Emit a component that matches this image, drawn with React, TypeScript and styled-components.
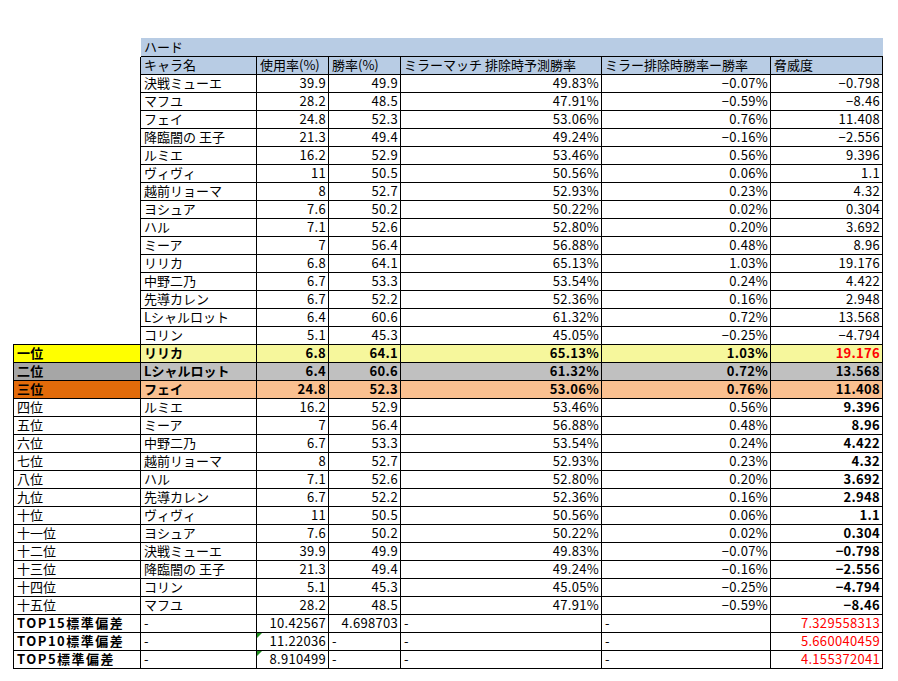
import React from "react";
import styled, { createGlobalStyle, css } from "styled-components";

const Global = createGlobalStyle`
  html, body { margin: 0; padding: 0; background: #fff; }
  body { font-family: "MS PGothic", "Noto Sans CJK JP", sans-serif; color: #000; }
`;

const Sheet = styled.div`
  box-sizing: border-box;
  width: 898px;
  height: 681px;
  padding: 38px 0 0 13px;
`;

const Grid = styled.div`
  display: grid;
  grid-template-columns: 128px 116px 72px 72px 201px 169px 112px;
  grid-template-rows: 19px;
  grid-auto-rows: 18px;
  width: max-content;
  font-size: 13px;
`;

const Blank = styled.div<{ $edge?: boolean; $closed?: boolean }>`
  box-sizing: border-box;
  ${(p) => p.$edge && css`border-right: 1px solid #000;`}
  ${(p) => p.$closed && css`border-bottom: 1px solid #000;`}
`;

const Title = styled.div`
  grid-column: 2 / 8;
  box-sizing: border-box;
  background: #b8cce4;
  border-bottom: 1px solid #000;
  padding: 1px 3px 0;
  line-height: 16px;
`;

type Tone = "plain" | "head" | "gold" | "silver" | "bronze";
const rowBg: Record<Tone, string> = {
  plain: "#ffffff",
  head: "#b8cce4",
  gold: "#f6f79c",
  silver: "#c0c0c0",
  bronze: "#fac090",
};

const Cell = styled.div<{
  $tone?: Tone;
  $right?: boolean;
  $bold?: boolean;
  $red?: boolean;
  $flag?: boolean;
}>`
  position: relative;
  box-sizing: border-box;
  border-right: 1px solid #000;
  border-bottom: 1px solid #000;
  background: ${(p) => rowBg[p.$tone || "plain"]};
  padding: 0 2px 1px 3px;
  line-height: 16px;
  white-space: nowrap;
  text-align: ${(p) => (p.$right ? "right" : "left")};
  font-weight: ${(p) => (p.$bold ? 700 : 400)};
  letter-spacing: ${(p) => (p.$right ? "0.3px" : "0")};
  color: ${(p) => (p.$red ? "#ff0000" : "#000")};
  ${(p) =>
    p.$flag &&
    css`
      &::before {
        content: "";
        position: absolute;
        left: 0;
        top: 0;
        border-top: 5px solid #1f8f1f;
        border-right: 5px solid transparent;
      }
    `}
`;

type Medal = "none" | "gold" | "silver" | "bronze";
const medalBg: Record<Medal, string> = {
  none: "#ffffff",
  gold: "#ffff00",
  silver: "#a6a6a6",
  bronze: "#e26b0a",
};

const RankCell = styled.div<{ $medal?: Medal; $bold?: boolean; $wide?: boolean }>`
  box-sizing: border-box;
  border-left: 1px solid #000;
  border-right: 1px solid #000;
  border-bottom: 1px solid #000;
  background: ${(p) => medalBg[p.$medal || "none"]};
  padding: 0 2px 1px 3px;
  line-height: 16px;
  white-space: nowrap;
  font-weight: ${(p) => (p.$bold ? 700 : 400)};
  letter-spacing: ${(p) => (p.$wide ? "1.5px" : p.$bold ? "0.3px" : "0")};
`;

type Row = [string, string, string, string, string, string];

const data: Row[] = [
  ["決戦ミューエ", "39.9", "49.9", "49.83%", "−0.07%", "−0.798"],
  ["マフユ", "28.2", "48.5", "47.91%", "−0.59%", "−8.46"],
  ["フェイ", "24.8", "52.3", "53.06%", "0.76%", "11.408"],
  ["降臨闇の 王子", "21.3", "49.4", "49.24%", "−0.16%", "−2.556"],
  ["ルミエ", "16.2", "52.9", "53.46%", "0.56%", "9.396"],
  ["ヴィヴィ", "11", "50.5", "50.56%", "0.06%", "1.1"],
  ["越前リョーマ", "8", "52.7", "52.93%", "0.23%", "4.32"],
  ["ヨシュア", "7.6", "50.2", "50.22%", "0.02%", "0.304"],
  ["ハル", "7.1", "52.6", "52.80%", "0.20%", "3.692"],
  ["ミーア", "7", "56.4", "56.88%", "0.48%", "8.96"],
  ["リリカ", "6.8", "64.1", "65.13%", "1.03%", "19.176"],
  ["中野二乃", "6.7", "53.3", "53.54%", "0.24%", "4.422"],
  ["先導カレン", "6.7", "52.2", "52.36%", "0.16%", "2.948"],
  ["Lシャルロット", "6.4", "60.6", "61.32%", "0.72%", "13.568"],
  ["コリン", "5.1", "45.3", "45.05%", "−0.25%", "−4.794"],
];

const rankLabels = [
  "一位", "二位", "三位", "四位", "五位", "六位", "七位", "八位",
  "九位", "十位", "十一位", "十二位", "十三位", "十四位", "十五位",
];

const ranked: Row[] = [
  data[10], data[13], data[2], data[4], data[9], data[11], data[6], data[8],
  data[12], data[5], data[7], data[0], data[3], data[14], data[1],
];

const medals: Medal[] = ["gold", "silver", "bronze"];

type Stat = { label: string; values: string[]; flag?: boolean };
const stats: Stat[] = [
  { label: "TOP15標準偏差", values: ["-", "10.42567", "4.698703", "-", "-", "7.329558313"] },
  { label: "TOP10標準偏差", values: ["-", "11.22036", "-", "-", "-", "5.660040459"], flag: true },
  { label: "TOP5標準偏差", values: ["-", "8.910499", "-", "-", "-", "4.155372041"], flag: true },
];

const headers = ["キャラ名", "使用率(%)", "勝率(%)", "ミラーマッチ 排除時予測勝率", "ミラー排除時勝率ー勝率", "脅威度"];

function RowCells({ row, tone, bold, threatBold, threatRed }: {
  row: Row; tone?: Tone; bold?: boolean; threatBold?: boolean; threatRed?: boolean;
}) {
  return (
    <>
      <Cell $tone={tone} $bold={bold}>{row[0]}</Cell>
      {row.slice(1, 5).map((v, i) => (
        <Cell key={i} $tone={tone} $bold={bold} $right>{v}</Cell>
      ))}
      <Cell $tone={tone} $bold={bold || threatBold} $red={threatRed} $right>{row[5]}</Cell>
    </>
  );
}

export default function App() {
  return (
    <>
      <Global />
      <Sheet>
        <Grid>
          <Blank />
          <Title>ハード</Title>

          <Blank $edge />
          {headers.map((h) => (
            <Cell key={h} $tone="head">{h}</Cell>
          ))}

          {data.map((row, i) => (
            <React.Fragment key={"d" + i}>
              <Blank $edge $closed={i === data.length - 1} />
              <RowCells row={row} />
            </React.Fragment>
          ))}

          {ranked.map((row, i) => {
            const medal = medals[i];
            const tone: Tone = medal ? (medal as Tone) : "plain";
            return (
              <React.Fragment key={"r" + i}>
                <RankCell $medal={medal || "none"} $bold={!!medal}>{rankLabels[i]}</RankCell>
                <RowCells
                  row={row}
                  tone={tone}
                  bold={!!medal}
                  threatBold
                  threatRed={i === 0}
                />
              </React.Fragment>
            );
          })}

          {stats.map((s) => (
            <React.Fragment key={s.label}>
              <RankCell $bold $wide>{s.label}</RankCell>
              {s.values.map((v, i) => {
                const isNum = v !== "-";
                return (
                  <Cell
                    key={i}
                    $right={isNum}
                    $red={i === 5}
                    $flag={i === 1 && s.flag}
                  >
                    {v}
                  </Cell>
                );
              })}
            </React.Fragment>
          ))}
        </Grid>
      </Sheet>
    </>
  );
}
